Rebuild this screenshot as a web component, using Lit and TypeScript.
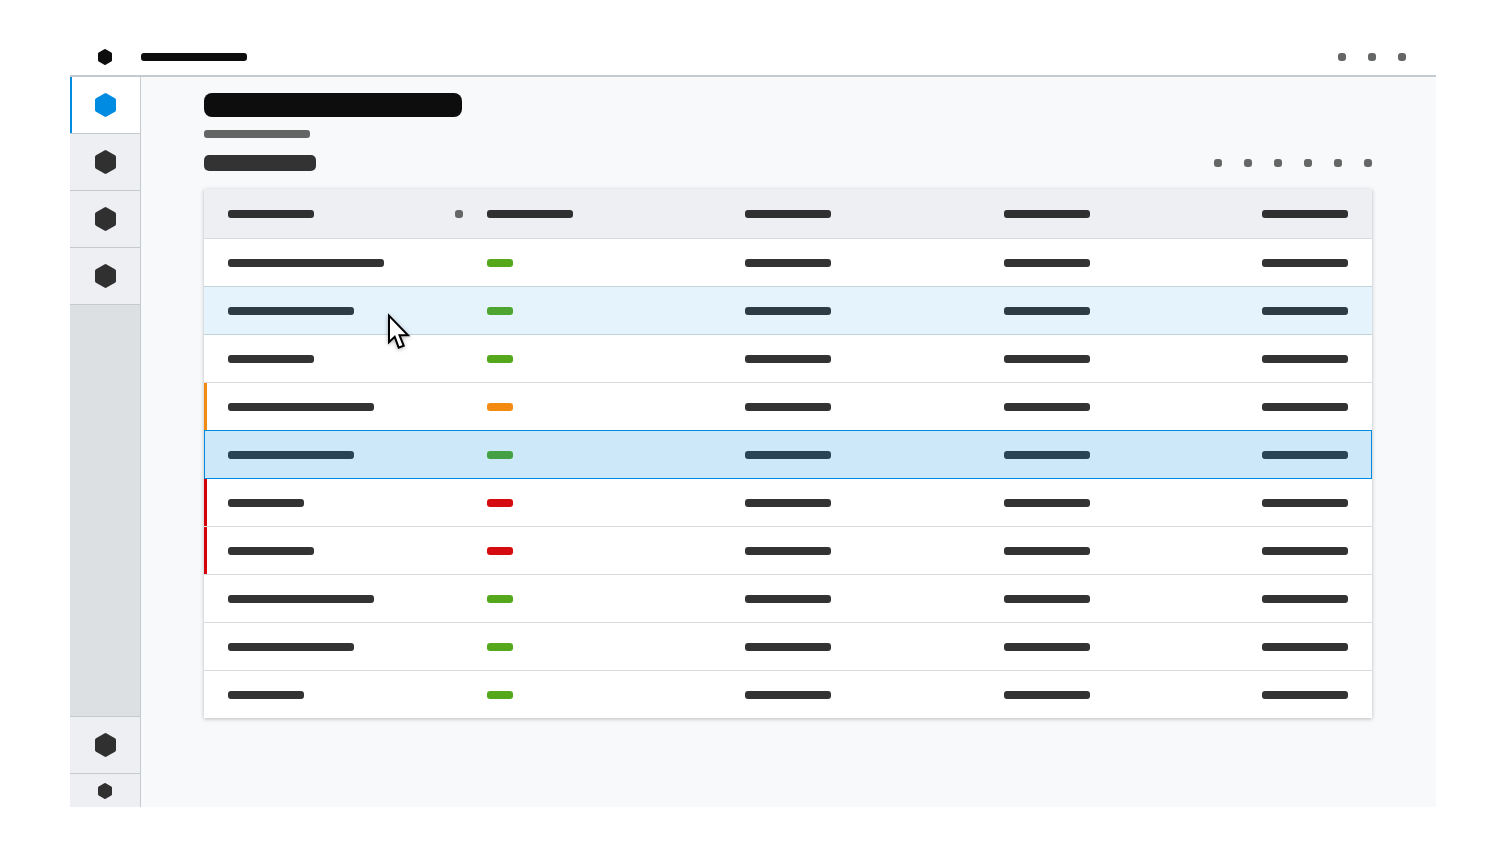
import { LitElement, html, css, svg } from "lit";
import { customElement } from "lit/decorators.js";
import { classMap } from "lit/directives/class-map.js";

type Row = { name: number; status: "ok" | "warn" | "error"; state?: "hover" | "selected" };

const ROWS: Row[] = [
  { name: 156, status: "ok" },
  { name: 126, status: "ok", state: "hover" },
  { name: 86, status: "ok" },
  { name: 146, status: "warn" },
  { name: 126, status: "ok", state: "selected" },
  { name: 76, status: "error" },
  { name: 86, status: "error" },
  { name: 146, status: "ok" },
  { name: 126, status: "ok" },
  { name: 76, status: "ok" },
];

const hexLarge = html`<svg width="21" height="24" viewBox="0 0 21 24">
  <path fill="currentColor" d="M9.4.4Q10.5-.2 11.6.4L20 5.3Q21 5.9 21 7V17Q21 18.1 20 18.7L11.6 23.6Q10.5 24.2 9.4 23.6L1 18.7Q0 18.1 0 17V7Q0 5.9 1 5.3Z"></path>
</svg>`;
const hexSmall = html`<svg width="14" height="16" viewBox="0 0 14 16">
  <path fill="currentColor" d="M6.3.3Q7-.1 7.7.3L13.3 3.5Q14 3.9 14 4.7V11.3Q14 12.1 13.3 12.5L7.7 15.7Q7 16.1 6.3 15.7L.7 12.5Q0 12.1 0 11.3V4.7Q0 3.9 .7 3.5Z"></path>
</svg>`;

const dots = (n: number) => Array.from({ length: n }, () => html`<i class="dot"></i>`);

@customElement("app-root")
export class AppRoot extends LitElement {
  static styles = css`
    :host {
      display: block;
      box-sizing: border-box;
      height: 847px;
      padding: 38px 71px 40px 70px;
      background: #fff;
      font-family: "Open Sans", sans-serif;
    }
    * { box-sizing: border-box; }
    svg { display: block; }
    .frame { display: flex; flex-direction: column; width: 1366px; height: 769px; }
    .top {
      display: flex; align-items: center; flex: none; height: 39px;
      padding: 0 30px 0 28px;
      border-bottom: 2px solid #c5cace;
      color: #0d0d0d;
    }
    .bar { display: block; height: 8px; border-radius: 3px; background: #333; }
    .bar.brand { width: 106px; background: #0d0d0d; margin-left: 29px; }
    .dot { display: block; width: 8px; height: 8px; border-radius: 3px; background: #656766; }
    .dots { display: flex; gap: 22px; margin-left: auto; }
    .body { display: flex; flex: 1; min-height: 0; }
    .nav {
      display: flex; flex-direction: column; width: 71px;
      border-right: 1px solid #c5cace; background: #dce0e3; color: #303030;
    }
    .item {
      display: flex; flex: none; height: 57px; padding: 16px 0 0 25px;
      background: #eeeff3; border-bottom: 1px solid #c5cace;
    }
    .item.active { background: #fff; color: #008be3; border-left: 2px solid #008be3; padding-left: 23px; border-bottom-width: 0; height: 56px; }
    .rule { flex: none; height: 1px; background: #c5cace; }
    .spacer { flex: 1; border-bottom: 1px solid #c5cace; }
    .item.small { height: 33px; padding: 9px 0 0 28px; border: 0; }
    .main { flex: 1; background: #f8f9fb; padding: 16px 64px 0 63px; }
    .title { width: 258px; height: 24px; border-radius: 8px; background: #0d0d0d; }
    .subtitle { width: 106px; margin-top: 13px; background: #646665; }
    .toolbar { display: flex; align-items: center; height: 16px; margin-top: 17px; }
    .section { width: 112px; height: 16px; border-radius: 5px; }
    .table { margin-top: 18px; height: 529px; background: #fff; box-shadow: 0 1px 4px rgba(0,0,0,.25); }
    .row {
      position: relative;
      display: grid; grid-template-columns: 259px 258px 259px 258px 86px;
      height: 48px; padding: 20px 24px 0;
      border-bottom: 1px solid #d9dcde;
    }
    .row:last-child { border: 0; height: 47px; }
    .head { height: 50px; padding-top: 21px; background: #eeeff3; }
    .head .bar { background: #303030; }
    .cell { width: 86px; }
    .first { display: flex; padding-right: 24px; }
    .ok { background: #55a71c; }
    .warn { background: #f38b12; }
    .error { background: #d60b10; }
    .tag { width: 26px; }
    .has-warn::before, .has-error::before {
      content: ""; position: absolute; left: 0; top: 0; bottom: 0; width: 3px;
    }
    .has-warn::before { background: #f38b12; }
    .has-error::before { background: #d5000b; }
    .hover::after, .selected::after {
      content: ""; position: absolute; inset: -1px 0;
      background: rgba(0,139,227,.106);
    }
    .selected::after { background: rgba(0,139,227,.2); border: 1px solid #008be3; z-index: 1; }
    .pointer {
      position: absolute; left: 182px; top: 24px; z-index: 2;
      filter: drop-shadow(0 1px 2px rgba(0,0,0,.3));
    }
  `;

  row(r: Row) {
    return html`<div class=${classMap({
      row: true,
      hover: r.state === "hover",
      selected: r.state === "selected",
      "has-warn": r.status === "warn",
      "has-error": r.status === "error",
    })}>
      <div><i class="bar" style="width:${r.name}px"></i></div>
      <i class="bar tag ${r.status}"></i>
      <i class="bar cell"></i><i class="bar cell"></i><i class="bar cell"></i>
      ${r.state === "hover"
        ? html`<svg class="pointer" width="26" height="40" viewBox="0 0 26 40">${svg`
            <path d="M3 4.6V31.2L8.7 25.8L12.7 36.6L17.7 34.7L13.5 24.2H22Z" fill="#fff" stroke="#000" stroke-width="2"></path>`}</svg>`
        : ""}
    </div>`;
  }

  render() {
    return html`<div class="frame">
      <header class="top">${hexSmall}<i class="bar brand"></i><div class="dots">${dots(3)}</div></header>
      <div class="body">
        <nav class="nav">
          <div class="item active">${hexLarge}</div>
          <div class="rule"></div>
          <div class="item">${hexLarge}</div>
          <div class="item">${hexLarge}</div>
          <div class="item">${hexLarge}</div>
          <div class="spacer"></div>
          <div class="item">${hexLarge}</div>
          <div class="item small">${hexSmall}</div>
        </nav>
        <main class="main">
          <i class="bar title"></i>
          <i class="bar subtitle"></i>
          <div class="toolbar"><i class="bar section"></i><div class="dots">${dots(6)}</div></div>
          <div class="table">
            <div class="row head">
              <div class="first"><i class="bar cell"></i><div class="dots"><i class="dot"></i></div></div>
              <i class="bar cell"></i><i class="bar cell"></i><i class="bar cell"></i><i class="bar cell"></i>
            </div>
            ${ROWS.map((r) => this.row(r))}
          </div>
        </main>
      </div>
    </div>`;
  }
}
